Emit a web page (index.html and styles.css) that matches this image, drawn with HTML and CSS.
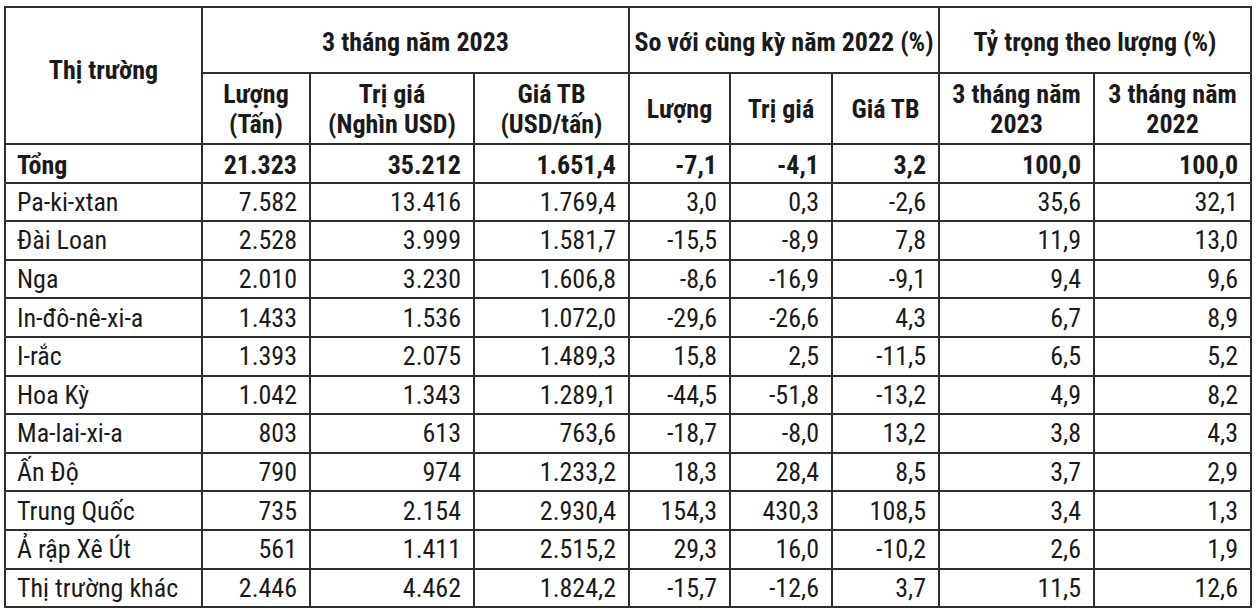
FILE: index.html
```html
<!DOCTYPE html>
<html lang="vi">
<head>
<meta charset="utf-8">
<link rel="stylesheet" href="styles.css">
</head>
<body>
<table class="data">
  <colgroup>
    <col class="c-name"><col class="c1"><col class="c2"><col class="c3"><col class="c4"><col class="c5"><col class="c6"><col class="c7"><col class="c8">
  </colgroup>
  <thead>
    <tr class="h1">
      <th rowspan="2" class="name-head">Thị trường</th>
      <th colspan="3">3 tháng năm 2023</th>
      <th colspan="3">So với cùng kỳ năm 2022 (%)</th>
      <th colspan="2">Tỷ trọng theo lượng (%)</th>
    </tr>
    <tr class="h2">
      <th>Lượng<br>(Tấn)</th>
      <th>Trị giá<br>(Nghìn USD)</th>
      <th>Giá TB<br>(USD/tấn)</th>
      <th>Lượng</th>
      <th>Trị giá</th>
      <th>Giá TB</th>
      <th>3 tháng năm<br>2023</th>
      <th>3 tháng năm<br>2022</th>
    </tr>
  </thead>
  <tbody>
    <tr class="total"><td>Tổng</td><td>21.323</td><td>35.212</td><td>1.651,4</td><td>-7,1</td><td>-4,1</td><td>3,2</td><td>100,0</td><td>100,0</td></tr>
    <tr><td>Pa-ki-xtan</td><td>7.582</td><td>13.416</td><td>1.769,4</td><td>3,0</td><td>0,3</td><td>-2,6</td><td>35,6</td><td>32,1</td></tr>
    <tr><td>Đài Loan</td><td>2.528</td><td>3.999</td><td>1.581,7</td><td>-15,5</td><td>-8,9</td><td>7,8</td><td>11,9</td><td>13,0</td></tr>
    <tr><td>Nga</td><td>2.010</td><td>3.230</td><td>1.606,8</td><td>-8,6</td><td>-16,9</td><td>-9,1</td><td>9,4</td><td>9,6</td></tr>
    <tr><td>In-đô-nê-xi-a</td><td>1.433</td><td>1.536</td><td>1.072,0</td><td>-29,6</td><td>-26,6</td><td>4,3</td><td>6,7</td><td>8,9</td></tr>
    <tr><td>I-rắc</td><td>1.393</td><td>2.075</td><td>1.489,3</td><td>15,8</td><td>2,5</td><td>-11,5</td><td>6,5</td><td>5,2</td></tr>
    <tr><td>Hoa Kỳ</td><td>1.042</td><td>1.343</td><td>1.289,1</td><td>-44,5</td><td>-51,8</td><td>-13,2</td><td>4,9</td><td>8,2</td></tr>
    <tr><td>Ma-lai-xi-a</td><td>803</td><td>613</td><td>763,6</td><td>-18,7</td><td>-8,0</td><td>13,2</td><td>3,8</td><td>4,3</td></tr>
    <tr><td>Ấn Độ</td><td>790</td><td>974</td><td>1.233,2</td><td>18,3</td><td>28,4</td><td>8,5</td><td>3,7</td><td>2,9</td></tr>
    <tr><td>Trung Quốc</td><td>735</td><td>2.154</td><td>2.930,4</td><td>154,3</td><td>430,3</td><td>108,5</td><td>3,4</td><td>1,3</td></tr>
    <tr><td>Ả rập Xê Út</td><td>561</td><td>1.411</td><td>2.515,2</td><td>29,3</td><td>16,0</td><td>-10,2</td><td>2,6</td><td>1,9</td></tr>
    <tr><td>Thị trường khác</td><td>2.446</td><td>4.462</td><td>1.824,2</td><td>-15,7</td><td>-12,6</td><td>3,7</td><td>11,5</td><td>12,6</td></tr>
  </tbody>
</table>
</body>
</html>
```
FILE: styles.css
```css
html, body {
  margin: 0;
  padding: 0;
  background: #ffffff;
}
body {
  padding: 6px 0 0 4px;
  font-family: "Roboto Condensed", "Roboto", "Liberation Sans", sans-serif;
  color: #1a1a1a;
}
.data {
  border-collapse: collapse;
  table-layout: fixed;
  width: 1246px;
  font-size: 26px;
}
.c-name { width: 197px; }
.c1 { width: 108px; }
.c2 { width: 164px; }
.c3 { width: 155px; }
.c4 { width: 101px; }
.c5 { width: 102px; }
.c6 { width: 107px; }
.c7 { width: 155px; }
.c8 { width: 157px; }
.data th, .data td {
  border: 2px solid #2e2e2e;
  padding: 0 12px 0 11px;
  line-height: 28px;
}
.data th {
  font-weight: 700;
  text-align: center;
  vertical-align: middle;
  padding: 0 4px;
  line-height: 30px;
}
.h1 th { height: 61px; padding-top: 3px; }
.h2 th { height: 69px; }
.data th.name-head { padding: 0 4px 12px; }
.data td {
  text-align: right;
  height: 36.6px;
}
.data td:first-child { text-align: left; }
.total td { font-weight: 700; padding-top: 3px; height: 33.6px; }
```
